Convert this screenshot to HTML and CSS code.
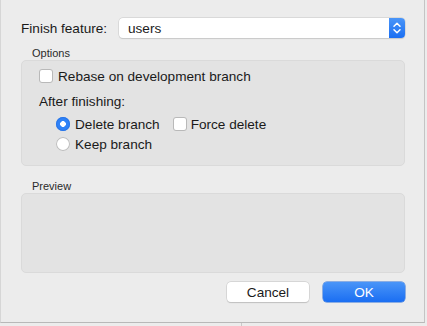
FILE: index.html
```html
<!DOCTYPE html>
<html>
<head>
<meta charset="utf-8">
<link rel="stylesheet" href="styles.css">
</head>
<body>
<div class="backdrop">
  <div class="dialog">
    <div class="row-feature">
      <span class="label">Finish feature:</span>
      <div class="popup">
        <span class="popup-value">users</span>
        <span class="stepper">
          <svg width="16" height="20" viewBox="0 0 16 20">
            <path d="M5 8.2 L8 5.2 L11 8.2" fill="none" stroke="#fff" stroke-width="1.5" stroke-linecap="round" stroke-linejoin="round"/>
            <path d="M5 11.8 L8 14.8 L11 11.8" fill="none" stroke="#fff" stroke-width="1.5" stroke-linecap="round" stroke-linejoin="round"/>
          </svg>
        </span>
      </div>
    </div>

    <div class="group-title">Options</div>
    <div class="group options">
      <label class="check-row">
        <span class="checkbox"></span>
        <span>Rebase on development branch</span>
      </label>
      <div class="subhead">After finishing:</div>
      <div class="choices">
        <div class="choice-line">
          <span class="radio on"></span><span class="choice-text">Delete branch</span>
          <span class="checkbox force"></span><span class="choice-text">Force delete</span>
        </div>
        <div class="choice-line">
          <span class="radio"></span><span class="choice-text">Keep branch</span>
        </div>
      </div>
    </div>

    <div class="group-title preview-title">Preview</div>
    <div class="group preview"></div>

    <div class="buttons">
      <button class="btn cancel">Cancel</button>
      <button class="btn ok">OK</button>
    </div>
  </div>
  <div class="under">
    <div class="under-left"></div>
    <div class="under-right"></div>
  </div>
</div>
</body>
</html>
```

FILE: styles.css
```css
* { box-sizing: border-box; }
html, body {
  margin: 0;
  padding: 0;
  background: #e9e9e9;
  width: 427px;
  height: 326px;
  overflow: hidden;
  font-family: "Liberation Sans", Arial, sans-serif;
  font-size: 13.6px;
  color: #1a1a1a;
}
.backdrop {
  width: 427px;
  height: 326px;
  background: #ececec;
}
.dialog {
  width: 425px;
  height: 323px;
  background: #ececec;
  border-left: 1px solid #d6d6d6;
  border-right: 1px solid #c4c4c4;
  border-bottom: 1px solid #b8b8b8;
  padding: 18px 19px 0 20px;
  display: flex;
  flex-direction: column;
}
.row-feature {
  display: flex;
  align-items: center;
  height: 20px;
}
.label {
  width: 98px;
}
.popup {
  margin-left: auto;
  width: 286px;
  height: 20px;
  background: #fff;
  border-radius: 4px;
  box-shadow: 0 0 0 0.5px #c9c9c9, 0 0.5px 1px rgba(0,0,0,0.15);
  display: flex;
  align-items: center;
  justify-content: space-between;
}
.popup-value {
  padding-left: 9px;
}
.stepper {
  width: 16px;
  height: 20px;
  border-radius: 0 4px 4px 0;
  background: linear-gradient(#4a95f8, #1b6ff2);
  display: flex;
}
.group-title {
  font-size: 11px;
  color: #2a2a2a;
  margin: 8px 0 0 11px;
  height: 14px;
  line-height: 14px;
}
.group {
  background: #e3e3e3;
  border: 1px solid #dadada;
  border-radius: 5px;
}
.options {
  height: 106px;
  padding: 8px 0 0 17px;
}
.check-row {
  display: flex;
  align-items: center;
  height: 14px;
  gap: 5px;
}
.checkbox {
  width: 14px;
  height: 14px;
  background: #fff;
  border-radius: 3px;
  box-shadow: inset 0 0 0 1px #b9b9b9;
  flex: none;
  display: inline-block;
}
.subhead {
  margin-top: 10px;
  height: 18px;
  line-height: 18px;
}
.choices {
  margin-top: 6px;
  padding-left: 17px;
  display: flex;
  flex-direction: column;
  gap: 6px;
}
.choice-line {
  display: flex;
  align-items: center;
  height: 14px;
}
.radio {
  width: 14px;
  height: 14px;
  border-radius: 50%;
  background: #fff;
  box-shadow: inset 0 0 0 1px #bdbdbd;
  flex: none;
  margin-right: 5px;
}
.radio.on {
  background: radial-gradient(circle, #fff 0 2.6px, #2f82f7 3.1px);
  box-shadow: inset 0 0 0 1px #2a76e8;
}
.checkbox.force {
  margin-left: 13px;
  margin-right: 4px;
}
.preview-title {
  margin-top: 13px;
}
.preview {
  height: 80px;
}
.buttons {
  margin-top: 9px;
  display: flex;
  justify-content: flex-end;
  gap: 14px;
}
.btn {
  width: 82px;
  height: 20px;
  border: none;
  border-radius: 4px;
  font-family: "Liberation Sans", Arial, sans-serif;
  font-size: 13.6px;
  padding: 0;
}
.cancel {
  background: #fff;
  color: #1a1a1a;
  box-shadow: 0 0 0 0.5px #c6c6c6, 0 0.5px 1px rgba(0,0,0,0.2);
}
.ok {
  background: linear-gradient(#4a95f8, #1a6ef2);
  color: #fff;
  box-shadow: 0 0 0 0.5px #2a6fd8;
}
.under {
  display: flex;
  height: 3px;
}
.under-left { width: 242px; border-right: 1px solid #c9c9c9; }
.under-right { flex: 1; }
```
